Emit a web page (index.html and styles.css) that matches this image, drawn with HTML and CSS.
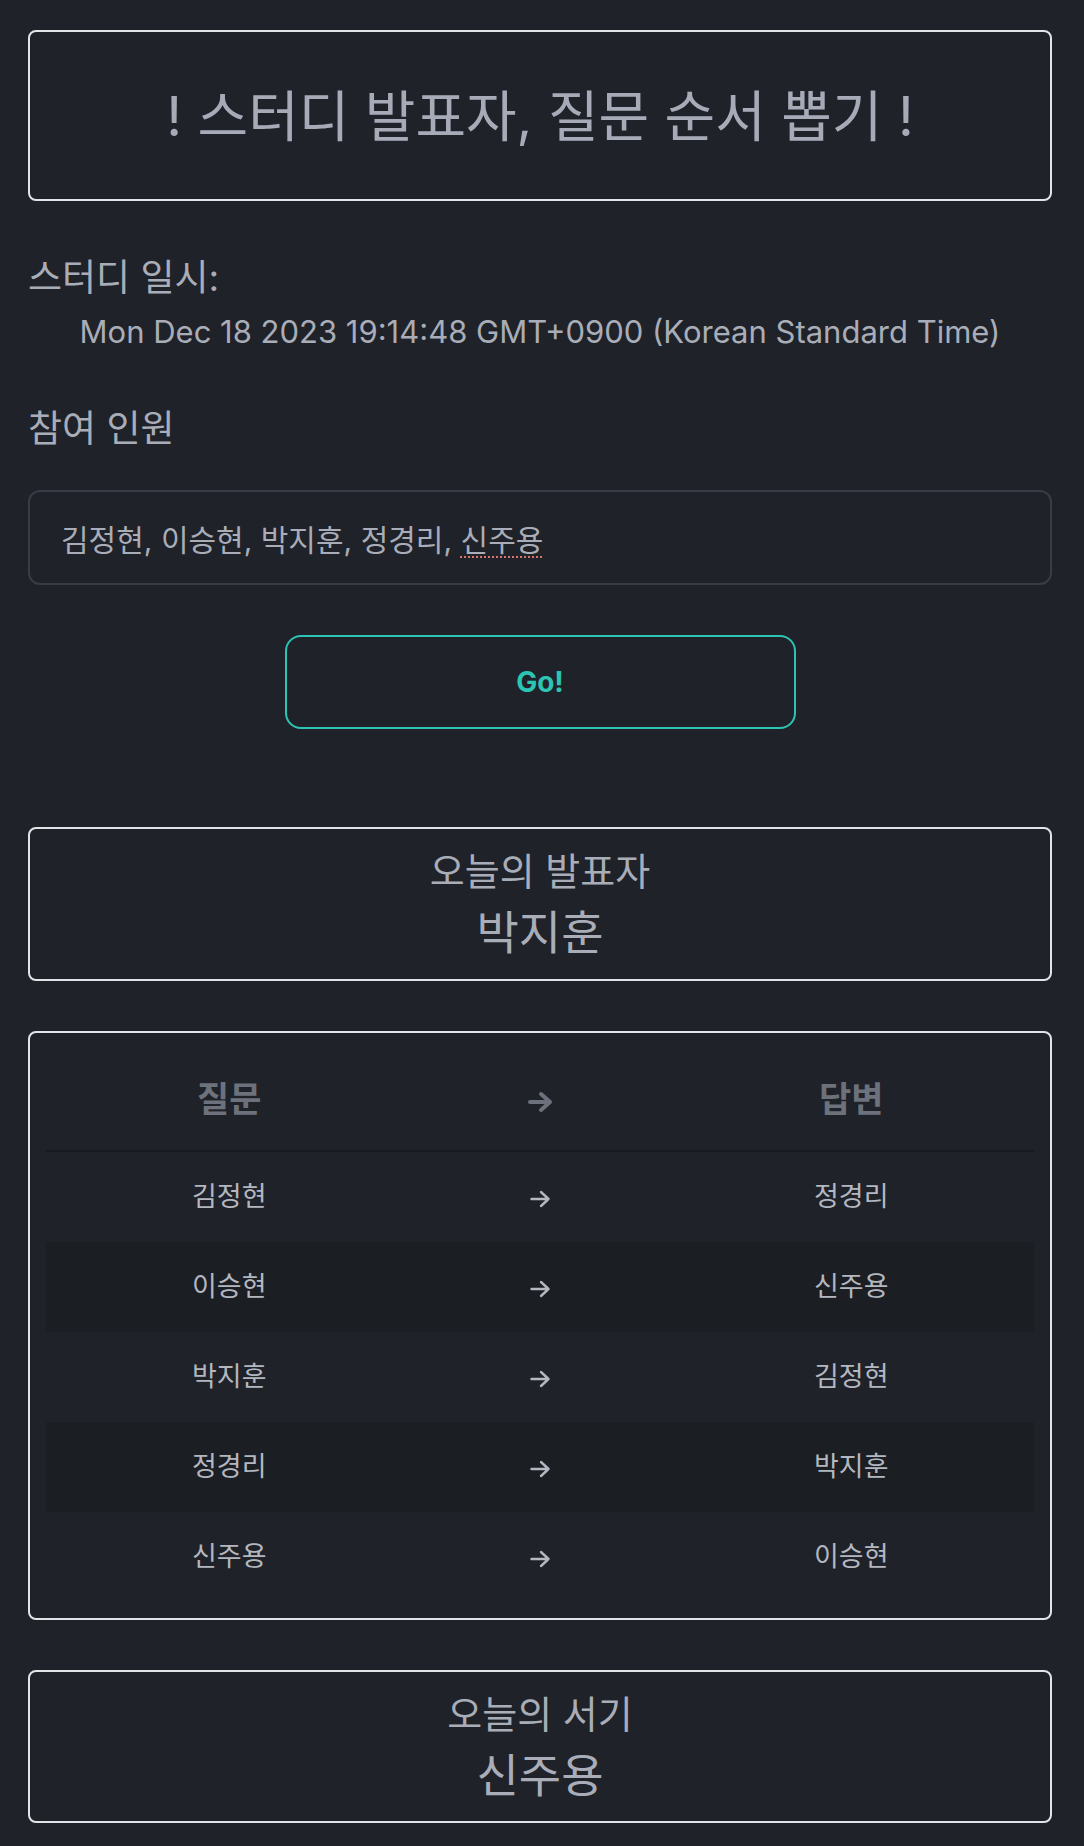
FILE: index.html
```html
<!DOCTYPE html>
<html lang="ko">
<head>
<meta charset="utf-8">
<title>스터디 발표자, 질문 순서 뽑기</title>
<link rel="stylesheet" href="styles.css">
</head>
<body>
<main class="page">
  <header class="title-box">
    <h1 class="title">! 스터디 발표자, 질문 순서 뽑기 !</h1>
  </header>

  <section class="schedule">
    <h2 class="label">스터디 일시:</h2>
    <p class="date">Mon Dec 18 2023 19:14:48 GMT+0900 (Korean Standard Time)</p>
  </section>

  <section class="members">
    <h2 class="label">참여 인원</h2>
    <div class="field"><span class="field-text">김정현, 이승현, 박지훈, 정경리, <span class="spell">신주용</span></span></div>
    <button class="go" type="button">Go!</button>
  </section>

  <section class="result-box">
    <p class="result-label">오늘의 발표자</p>
    <p class="result-name">박지훈</p>
  </section>

  <section class="table-box">
    <table class="pairs">
      <colgroup><col class="c-q"><col class="c-arrow"><col class="c-a"></colgroup>
      <thead>
        <tr>
          <th>질문</th>
          <th><svg class="arrow arrow-head" viewBox="0 0 26 22" aria-label="→"><path d="M3 11H23M14 3L23 11L14 19"/></svg></th>
          <th>답변</th>
        </tr>
      </thead>
      <tbody>
        <tr><td>김정현</td><td><svg class="arrow" viewBox="0 0 22 18" aria-label="→"><path d="M2.5 9H19.5M12 2L19.5 9L12 16"/></svg></td><td>정경리</td></tr>
        <tr><td>이승현</td><td><svg class="arrow" viewBox="0 0 22 18" aria-label="→"><path d="M2.5 9H19.5M12 2L19.5 9L12 16"/></svg></td><td>신주용</td></tr>
        <tr><td>박지훈</td><td><svg class="arrow" viewBox="0 0 22 18" aria-label="→"><path d="M2.5 9H19.5M12 2L19.5 9L12 16"/></svg></td><td>김정현</td></tr>
        <tr><td>정경리</td><td><svg class="arrow" viewBox="0 0 22 18" aria-label="→"><path d="M2.5 9H19.5M12 2L19.5 9L12 16"/></svg></td><td>박지훈</td></tr>
        <tr><td>신주용</td><td><svg class="arrow" viewBox="0 0 22 18" aria-label="→"><path d="M2.5 9H19.5M12 2L19.5 9L12 16"/></svg></td><td>이승현</td></tr>
      </tbody>
    </table>
  </section>

  <section class="result-box result-box-last">
    <p class="result-label">오늘의 서기</p>
    <p class="result-name">신주용</p>
  </section>
</main>
</body>
</html>
```

FILE: styles.css
```css
html {
  background: #1f2229;
}

body {
  margin: 0;
  font-family: Inter, "Noto Sans CJK KR", sans-serif;
  color: #a9adb8;
}

.page {
  display: flex;
  flex-direction: column;
  padding: 30px 32px 24px 28px;
}

.title-box {
  height: 171px;
  box-sizing: border-box;
  border: 2px solid #e3e4e7;
  border-radius: 8px;
  display: flex;
  align-items: center;
  justify-content: center;
}

.title {
  margin: 0;
  font-size: 55px;
  font-weight: 400;
  line-height: 66px;
  color: #a7abb8;
}

.label {
  margin: 0;
  font-size: 37px;
  font-weight: 400;
  line-height: 51px;
}

.schedule {
  margin-top: 51px;
}

.date {
  margin: 6px 0 0;
  text-align: center;
  font-size: 31px;
  line-height: 45px;
}

.members {
  margin-top: 49px;
  display: flex;
  flex-direction: column;
}

.field {
  margin-top: 36px;
  height: 95px;
  box-sizing: border-box;
  border: 2px solid #393c46;
  border-radius: 12px;
  padding: 0 31px;
  display: flex;
  align-items: center;
  font-size: 30px;
}

.spell {
  text-decoration: underline dotted #d9746a;
  text-decoration-thickness: 2px;
  text-underline-offset: 6px;
}

.go {
  align-self: center;
  margin-top: 50px;
  width: 511px;
  height: 94px;
  box-sizing: border-box;
  border: 2px solid #2cc4b2;
  border-radius: 16px;
  background: transparent;
  color: #2cc4b2;
  font-family: Inter, sans-serif;
  font-size: 28px;
  font-weight: 700;
}

.result-box {
  margin-top: 98px;
  height: 154px;
  box-sizing: border-box;
  border: 2px solid #e3e4e7;
  border-radius: 8px;
  padding: 17px 16px 0;
  text-align: center;
}

.result-box-last {
  margin-top: 50px;
  height: 153px;
}

.result-label {
  margin: 0;
  font-size: 38px;
  line-height: 51px;
}

.result-name {
  margin: 4px 0 0;
  font-size: 46px;
  line-height: 63px;
}

.table-box {
  margin-top: 50px;
  border: 2px solid #e3e4e7;
  border-radius: 8px;
  padding: 16px;
}

.pairs {
  width: 100%;
  table-layout: fixed;
  border-collapse: separate;
  border-spacing: 0;
  text-align: center;
}

.c-q { width: 37.1%; }
.c-arrow { width: 25.9%; }
.c-a { width: 37%; }

.pairs th {
  font-size: 35px;
  font-weight: 700;
  color: #6d717b;
  line-height: 48px;
  padding: 26px 0 27px;
  border-bottom: 2px solid #17191e;
}

.pairs td {
  font-size: 27px;
  line-height: 38px;
  padding: 26px 0;
  color: #b3b7c0;
}

.pairs tbody tr:nth-child(even) td {
  background: #1b1e23;
}

.arrow {
  display: inline-block;
  vertical-align: middle;
  width: 22px;
  height: 18px;
  fill: none;
  stroke: #b3b7c0;
  stroke-width: 2.4;
  stroke-linecap: round;
  stroke-linejoin: round;
}

.arrow-head {
  width: 26px;
  height: 22px;
  stroke: #6d717b;
  stroke-width: 4;
}
```
